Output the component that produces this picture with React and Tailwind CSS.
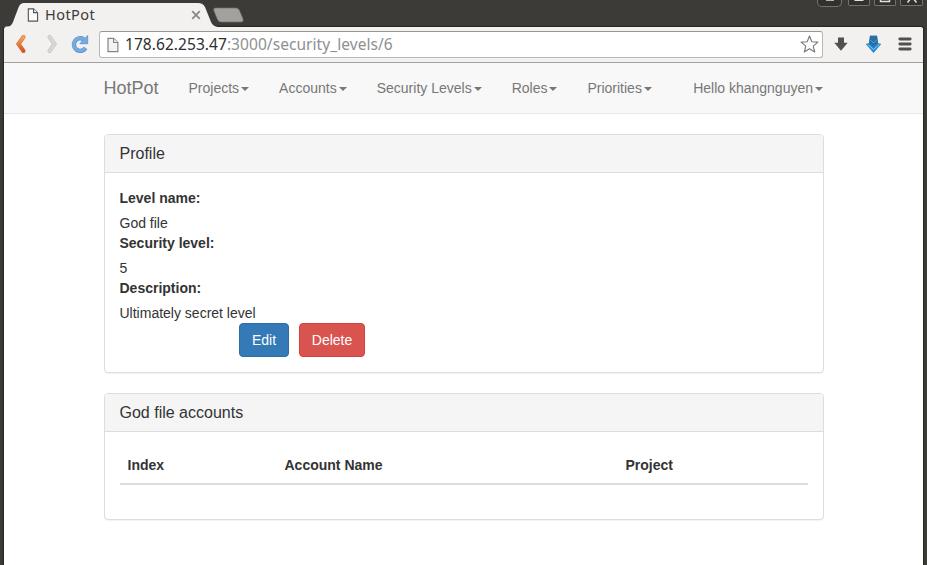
const UI = "font-['Noto_Sans','Open_Sans',sans-serif]";

function PageIcon({ className, fill, stroke }) {
  return (
    <svg className={className} viewBox="0 0 12 15" fill={fill} stroke={stroke} strokeWidth="1.2">
      <path d="M1 .9h5.6L10.9 5v9.1H1z" />
      <path d="M6.6.9V5h4.3" />
    </svg>
  );
}

function WindowButton({ className, children }) {
  return (
    <div className={`overflow-hidden border border-t-0 border-[#75736c] bg-[#32312e] ${className}`}>
      <svg className="mx-auto block h-[6px] w-[14px]" viewBox="0 0 14 6" fill="none" stroke="#e4e1da" strokeWidth="1.5">
        {children}
      </svg>
    </div>
  );
}

function TabStrip() {
  return (
    <div className="flex h-[27px] justify-between overflow-hidden">
      <div className="flex">
        <div className="relative flex h-[27px] w-[213px] items-center">
          <svg className="absolute left-0 top-0 h-[27px] w-[220px]" viewBox="0 0 220 27">
            <path d="M4 27Q6 26.5 9 26.3C12 25.8 13 22 14.5 18L18.5 7.5Q20 3 24 3H198Q203 3 205 7L211 22Q213 26.5 218 27Z" fill="#f2f1f0" />
          </svg>
          <PageIcon className="relative ml-[27px] mt-[2px] h-[14px] w-[12px]" fill="#fafafa" stroke="#555" />
          <span className={`relative ml-[6px] mt-px text-[14.5px] leading-5 tracking-[.45px] text-[#3c3b37] ${UI}`}>HotPot</span>
          <svg className="absolute left-[191px] top-[10px] size-[10px]" viewBox="0 0 10 10" stroke="#8b8a88" strokeWidth="1.8">
            <path d="M1.2 1.2l7.6 7.6M8.8 1.2L1.2 8.8" />
          </svg>
        </div>
        <svg className="mt-[7px] h-[16px] w-[32px]" viewBox="0 0 32 16">
          <path d="M2.5 1H23Q25.5 1 26.5 3.5L30 12Q31 15 28 15H8Q5.500 15 4.500 12.500L.8 3.500Q0 1 2.500 1Z" fill="#a3a19d" stroke="#72706b" strokeWidth=".7" />
        </svg>
      </div>
      <div className="flex pr-[4px]">
        <WindowButton className="mr-[6px] h-[7px] w-[25px] rounded-b-[5px]"><path d="M3 0h8" /></WindowButton>
        <WindowButton className="mr-[4px] h-[6px] w-[22px] rounded-b-[2px]"><path d="M2.500 0h9" strokeWidth="2" /></WindowButton>
        <WindowButton className="mr-[4px] h-[6px] w-[22px] rounded-b-[2px]"><path d="M2.500 -1v2.500h9V-1" /></WindowButton>
        <WindowButton className="h-[6px] w-[23px] rounded-b-[2px]"><path d="M6-2L2.500 2.500M8-2l3.500 4.500" /></WindowButton>
      </div>
    </div>
  );
}

function Toolbar() {
  return (
    <div className="flex h-[36px] items-center rounded-t-[3px] border-b border-[#a3a2a0] bg-[#f2f1f0] pb-px">
      <svg className="ml-[10px] h-[20px] w-[13px]" viewBox="0 0 13 20" fill="none" strokeLinecap="round">
        <defs>
          <linearGradient id="back" x1="0" y1="0" x2="0" y2="1">
            <stop stopColor="#f5a55c" /><stop offset="1" stopColor="#dc531d" />
          </linearGradient>
        </defs>
        <path d="M9.500 3L4.500 10l5 7" stroke="#c96a36" strokeWidth="4" />
        <path d="M9.500 3L4.500 10l5 7" stroke="url(#back)" strokeWidth="3.200" />
      </svg>
      <svg className="ml-[18px] h-[20px] w-[13px]" viewBox="0 0 13 20" fill="none" strokeLinecap="round">
        <path d="M4.500 3l5 7-5 7" stroke="#c4c3c1" strokeWidth="4" />
        <path d="M4.500 3l5 7-5 7" stroke="#d8d7d5" strokeWidth="3" />
      </svg>
      <svg className="ml-[12px] size-[20px]" viewBox="0 0 20 20" fill="none">
        <path d="M13.700 5.300A6.300 6.300 0 1 0 15.500 14" stroke="#5b90c8" strokeWidth="4.400" />
        <path d="M17.700 1.500V9.700H9.800Z" fill="#76abe0" stroke="#5b90c8" strokeWidth=".8" />
        <path d="M14 5.500A6.300 6.300 0 1 0 15.300 13.800" stroke="#76abe0" strokeWidth="3.200" />
      </svg>
      <div className="ml-[9px] mt-px flex h-[27px] w-[724px] items-center rounded-[3px] border border-[#b9b8b6] border-t-[#989795] bg-white">
        <PageIcon className="ml-[7px] h-[16px] w-[12px]" fill="#f3f3f3" stroke="#858585" />
        <span className={`-mt-[2px] ml-[6px] whitespace-pre text-[15.5px] leading-6 tracking-[.06px] text-[#2f2f2f] ${UI}`}>178.62.253.47<span className="text-[#909090]">:3000/security_levels/6</span></span>
        <svg className="ml-auto mr-[3px] size-[19px]" viewBox="0 0 19 19" fill="#fff" stroke="#777" strokeWidth="1.100" strokeLinejoin="round">
          <path d="M9.500 1L11.800 6.700 17.900 7.100 13.200 11.100 14.700 17 9.500 13.800 4.300 17 5.800 11.100 1.100 7.100 7.200 6.700Z" />
        </svg>
      </div>
      <svg className="ml-[11px] h-[14px] w-[14px]" viewBox="0 0 14 14" fill="#505050">
        <path d="M4 .5h6v5.300H13.700L7 13.700.3 5.800H4Z" />
      </svg>
      <svg className="ml-[17px] h-[19px] w-[17px]" viewBox="0 0 17 19">
        <path d="M5 .8h7l1 7.200 3.300 1L8.500 18 .7 9 4 8Z" fill="#2787d2" />
        <path d="M5 .8h7l1 7.200-4.500 4L4 8Z" fill="#2b6ea3" />
        <path d="M5.500 5l3 3 3-3" fill="none" stroke="#5fa9d8" strokeWidth=".8" />
        <path d="M2.500 9.300l6 5.200 6-5.200" fill="none" stroke="#8bd2f7" strokeWidth=".9" />
      </svg>
      <svg className="ml-[16px] h-[14px] w-[14px]" viewBox="0 0 14 14" stroke="#505050" strokeWidth="2.800" strokeLinecap="round">
        <path d="M1.800 2h10.400M1.800 7h10.400M1.800 12h10.400" />
      </svg>
    </div>
  );
}

function MenuLink({ label }) {
  return (
    <span className="flex items-center whitespace-nowrap text-sm leading-5">
      {label}
      <i className="ml-[2px] mt-px border-x-4 border-t-4 border-x-transparent border-t-[#777]" />
    </span>
  );
}

function NavBar() {
  return (
    <nav className="h-[51px] border-b border-[#e7e7e7] bg-[#f8f8f8] text-[#777]">
      <div className="ml-[99.5px] flex h-[50px] w-[719.5px] items-center">
        <span className="mr-[30px] text-lg leading-5">HotPot</span>
        <div className="flex gap-[30px]">
          {["Projects", "Accounts", "Security Levels", "Roles", "Priorities"].map((m) => <MenuLink key={m} label={m} />)}
        </div>
        <div className="ml-auto"><MenuLink label="Hello khangnguyen" /></div>
      </div>
    </nav>
  );
}

function Panel({ title, className, children }) {
  return (
    <section className={`ml-[100px] w-[720px] rounded-[4px] border border-[#ddd] bg-white shadow-[0_1px_1px_rgba(0,0,0,.05)] ${className}`}>
      <h3 className="h-[38px] rounded-t-[3px] border-b border-[#ddd] bg-[#f5f5f5] px-[14.5px] pt-[10px] text-base leading-[17.6px]">{title}</h3>
      <div className="p-[15px]">{children}</div>
    </section>
  );
}

const fields = [
  ["Level name:", "God file"],
  ["Security level:", "5"],
  ["Description:", "Ultimately secret level"],
];

export default function App() {
  return (
    <div className="flex h-[565px] w-[927px] flex-col overflow-hidden bg-[#3c3b37] font-['Liberation_Sans',Arial,sans-serif] text-[#333]">
      <TabStrip />
      <div className="ml-[4px] w-[919px] flex-1 rounded-t-[3px] bg-white shadow-[0_0_1px_1px_rgba(0,0,0,.35)]">
        <Toolbar />
        <NavBar />
        <Panel title="Profile" className="mt-5 h-[239px]">
          <dl className="-ml-[.5px] text-sm leading-5">
            {fields.map(([name, value]) => (
              <div key={name}>
                <dt className="mb-[5px] font-bold">{name}</dt>
                <dd>{value}</dd>
              </div>
            ))}
          </dl>
          <div className="ml-[119px] flex gap-[10px] text-sm leading-5 text-white">
            <button className="h-[34px] w-[50px] rounded-[4px] border border-[#2e6da4] bg-[#337ab7]">Edit</button>
            <button className="h-[34px] w-[66px] rounded-[4px] border border-[#d43f3a] bg-[#d9534f]">Delete</button>
          </div>
        </Panel>
        <Panel title="God file accounts" className="mt-5 h-[127px]">
          <table className="w-[688px] table-fixed border-collapse text-left text-sm leading-5">
            <thead>
              <tr className="border-b-2 border-[#ddd]">
                <th className="w-[157px] p-2 pl-[7.5px]">Index</th>
                <th className="w-[341px] p-2 pl-[7.5px]">Account Name</th>
                <th className="p-2 pl-[7.5px]">Project</th>
              </tr>
            </thead>
          </table>
        </Panel>
      </div>
    </div>
  );
}
